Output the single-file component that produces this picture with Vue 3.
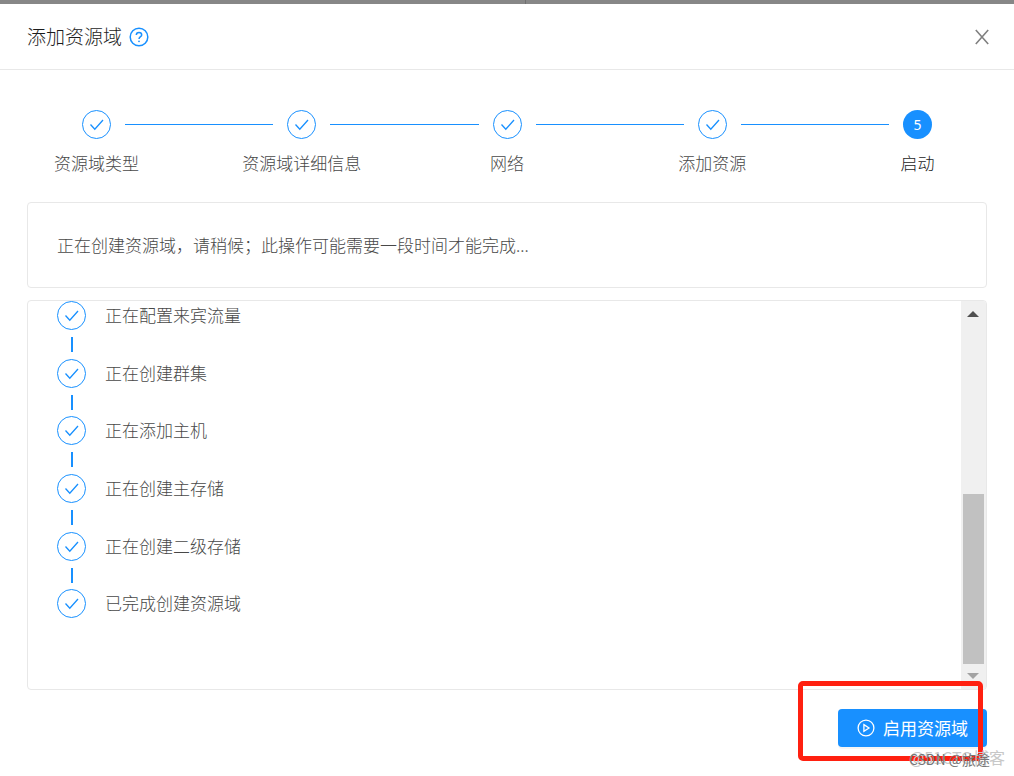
<script setup>
const steps = ['资源域类型', '资源域详细信息', '网络', '添加资源', '启动']
const current = 4
const tasks = [
  '正在配置来宾流量',
  '正在创建群集',
  '正在添加主机',
  '正在创建主存储',
  '正在创建二级存储',
  '已完成创建资源域',
]
</script>

<template>
  <div class="page">
    <div class="backdrop"><span class="divider"></span></div>
    <main class="dialog">
      <header class="head">
        <h1 class="title">添加资源域</h1>
        <a class="help" href="#" aria-label="帮助">
          <svg viewBox="0 0 20 20" width="20" height="20" fill="none" stroke="currentColor">
            <circle cx="10" cy="10" r="8.8" stroke-width="1.5" />
            <path d="M7.3 8.1C7.3 6.4 8.5 5.4 10 5.4S12.7 6.4 12.7 7.9C12.7 9.7 10 9.7 10 12" stroke-width="1.5" />
            <circle cx="10" cy="14.3" r="0.9" fill="currentColor" stroke="none" />
          </svg>
        </a>
        <button class="close" type="button" aria-label="关闭">
          <svg viewBox="0 0 14 16" width="14" height="16" fill="none" stroke="currentColor" stroke-width="1.6">
            <path d="M0.8 1L13.2 15M13.2 1L0.8 15" />
          </svg>
        </button>
      </header>

      <div class="body">
        <ol class="steps">
          <li v-for="(step, i) in steps" :key="step" class="step" :class="{ active: i === current }">
            <div class="track">
              <span class="dot" :class="{ solid: i === current }">
                <template v-if="i === current">{{ i + 1 }}</template>
                <svg v-else viewBox="0 0 29 29" width="29" height="29" fill="none" stroke="currentColor">
                  <circle cx="14.5" cy="14.5" r="14" />
                  <path d="M8.5 14.5L12.8 19.3L21 10" stroke-width="1.3" />
                </svg>
              </span>
              <span v-if="i < steps.length - 1" class="line"></span>
            </div>
            <span class="label">{{ step }}</span>
          </li>
        </ol>

        <section class="card notice">正在创建资源域，请稍候；此操作可能需要一段时间才能完成...</section>

        <section class="card progress">
          <ul class="tasks">
            <li v-for="task in tasks" :key="task" class="task">
              <div class="rail">
                <svg viewBox="0 0 29 29" width="29" height="29" fill="none" stroke="currentColor">
                  <circle cx="14.5" cy="14.5" r="14" />
                  <path d="M8.5 14.5L12.8 19.3L21 10" stroke-width="1.3" />
                </svg>
                <span class="tail"></span>
              </div>
              <span class="name">{{ task }}</span>
            </li>
          </ul>
          <div class="scrollbar" aria-hidden="true">
            <svg class="up" viewBox="0 0 12 6" width="12" height="6"><path d="M6 0L12 6H0Z" /></svg>
            <span class="thumb"></span>
            <svg class="down" viewBox="0 0 12 6" width="12" height="6"><path d="M0 0H12L6 6Z" /></svg>
          </div>
        </section>

        <footer class="foot">
          <button class="launch" type="button">
            <svg viewBox="0 0 18 18" width="18" height="18" fill="none" stroke="currentColor" stroke-width="1.3">
              <circle cx="9" cy="9" r="7.9" />
              <path d="M6.9 5.6L12 9L6.9 12.4Z" />
            </svg>
            <span>启用资源域</span>
          </button>
          <span class="marker"></span>
          <span class="mark back">@51CTO博客</span>
          <span class="mark front">CSDN @旅途</span>
        </footer>
      </div>
    </main>
  </div>
</template>

<style>
body {
  background: #fff;
}
</style>

<style scoped>
.page {
  min-height: 100vh;
  overflow: hidden;
  background: #fff;
  color: #484848;
  font: 300 17px/26px "Noto Sans CJK SC", sans-serif;
}
.backdrop {
  height: 4px;
  background: #878787;
  display: flex;
  justify-content: center;
}
.divider {
  width: 1px;
  margin-left: 36px;
  background: #707070;
}
.head {
  height: 65px;
  padding: 0 25px 0 27px;
  border-bottom: 1px solid #e8e8e8;
  display: flex;
  align-items: center;
}
.title {
  margin: 0;
  padding-bottom: 2px;
  color: #1c1c1c;
  font-size: 19px;
  font-weight: 300;
}
.help {
  display: flex;
  margin-left: 7px;
  color: #1890ff;
}
.close {
  display: flex;
  margin-left: auto;
  padding: 0;
  border: 0;
  background: none;
  color: #808080;
}
.body {
  padding: 40px 27px 0;
}
ol,
ul {
  margin: 0;
  padding: 0;
  list-style: none;
}
.steps {
  display: flex;
  height: 92px;
}
.step {
  flex: 1;
  min-width: 0;
}
.step:last-child {
  flex: 0 0 139px;
}
.track {
  display: flex;
  align-items: center;
  gap: 14px;
  padding-left: 55px;
}
.dot {
  flex: none;
  display: flex;
  align-items: center;
  justify-content: center;
  width: 29px;
  height: 29px;
  border-radius: 50%;
  color: #1890ff;
}
.solid {
  background: #1890ff;
  color: #fff;
  font: 400 14px/29px "Noto Sans", sans-serif;
}
.line {
  flex: 1;
  height: 1px;
  margin-right: -41px;
  background: #1890ff;
}
.label {
  display: block;
  width: 139px;
  margin-top: 11px;
  text-align: center;
  white-space: nowrap;
}
.active .label {
  color: #1c1c1c;
}
.card {
  border: 1px solid #e8e8e8;
  border-radius: 4px;
}
.notice {
  padding: 29px;
}
.progress {
  display: flex;
  margin-top: 12px;
  overflow: hidden;
}
.tasks {
  flex: 1;
  display: grid;
  grid-template-rows: repeat(6, 1fr);
  height: 346px;
  padding: 0 29px 42px;
}
.task {
  display: flex;
  gap: 19px;
}
.rail {
  display: flex;
  flex-direction: column;
  align-items: center;
  gap: 7px;
  color: #1890ff;
}
.rail svg {
  flex: none;
}
.tail {
  width: 2px;
  height: 15px;
  background: #1890ff;
}
.task:last-child .tail {
  display: none;
}
.name {
  line-height: 27px;
}
.scrollbar {
  display: flex;
  flex-direction: column;
  align-items: center;
  width: 25px;
  box-sizing: border-box;
  padding: 10px 1px 10px 0;
  background: #f0f0f0;
}
.up {
  fill: #505050;
}
.thumb {
  width: 21px;
  height: 170px;
  margin: auto 0 9px;
  background: #c1c1c1;
}
.down {
  fill: #a3a3a3;
}
.foot {
  position: relative;
  display: flex;
  justify-content: flex-end;
  padding: 19px 0 29px;
}
.launch {
  display: flex;
  align-items: center;
  gap: 8px;
  height: 38px;
  padding: 0 19px;
  border: 0;
  border-radius: 4px;
  background: #1890ff;
  color: #fff;
  font: inherit;
  font-weight: 400;
  box-shadow: 0 2px 0 rgba(0, 0, 0, 0.04);
}
.marker {
  position: absolute;
  top: -9px;
  right: 4px;
  width: 175px;
  height: 70px;
  border: 5px solid #ff2010;
  border-radius: 5px;
}
.mark {
  position: absolute;
  font-weight: 400;
  line-height: 20px;
  white-space: nowrap;
}
.back {
  top: 57px;
  right: -18px;
  color: #c8c8c8;
  font-size: 16px;
}
.front {
  top: 59px;
  right: -3px;
  color: #777;
  font-size: 14px;
}
</style>
